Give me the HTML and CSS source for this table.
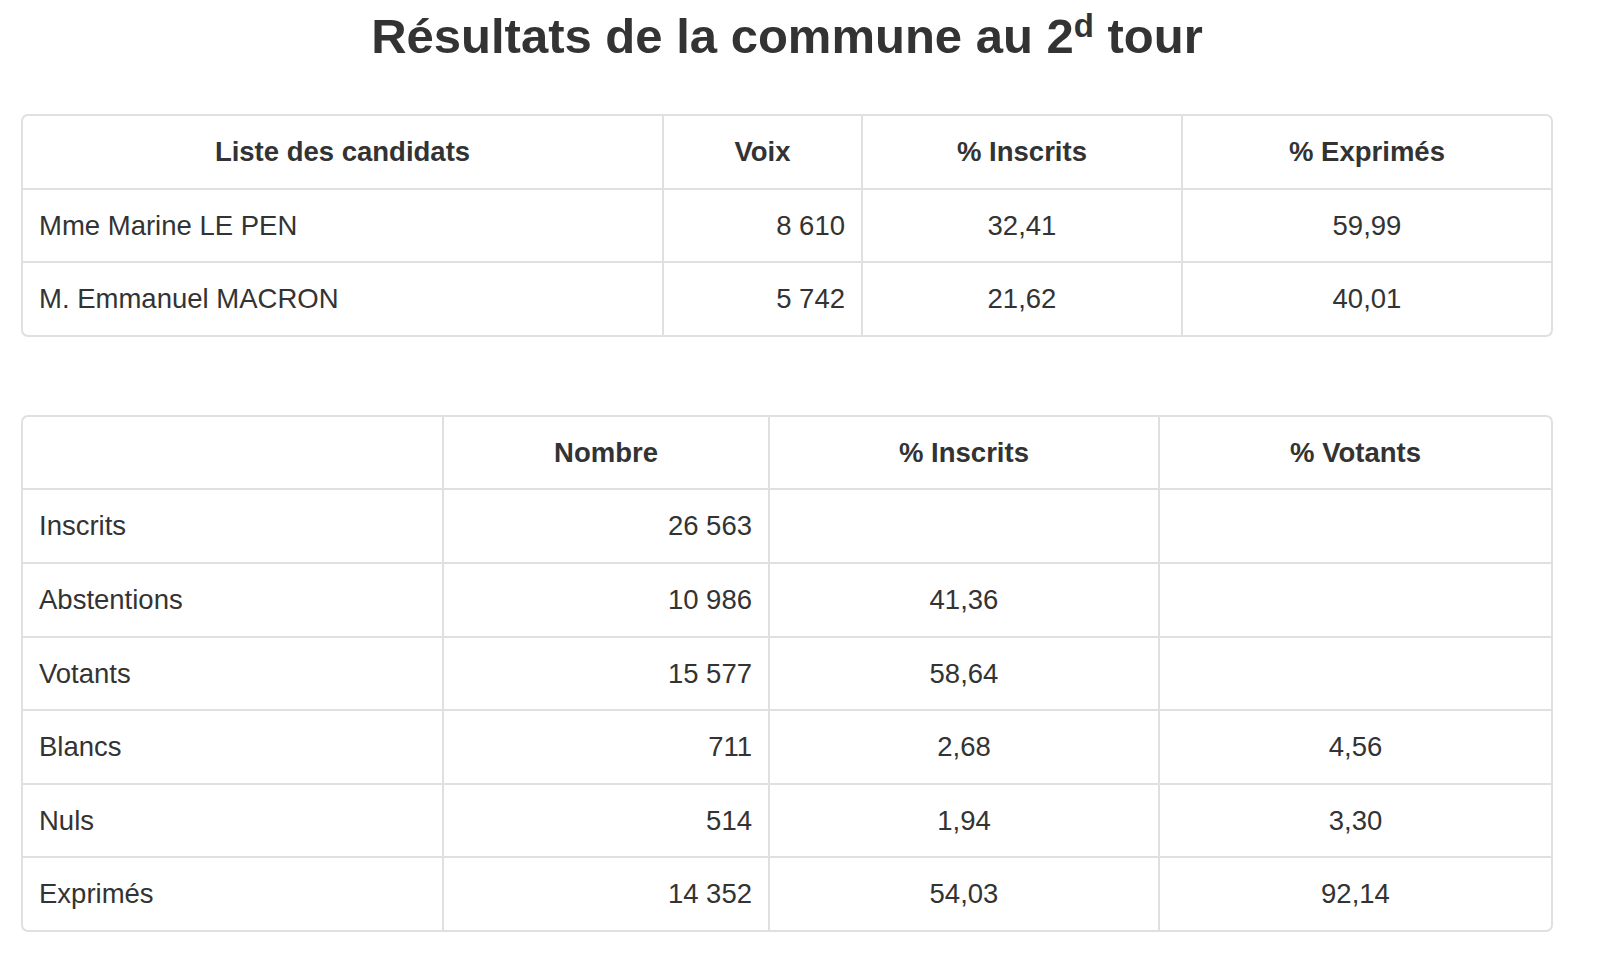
FILE: index.html
```html
<!DOCTYPE html>
<html lang="fr">
<head>
<meta charset="utf-8">
<title>Résultats de la commune au 2d tour</title>
<link rel="stylesheet" href="styles.css">
</head>
<body>
<div class="page">
  <h2 class="title">Résultats de la commune au 2<sup>d</sup> tour</h2>

  <div class="panel panel-candidats">
    <table class="results">
      <colgroup>
        <col class="c1a"><col class="c2a"><col class="c3a"><col class="c4a">
      </colgroup>
      <thead>
        <tr>
          <th>Liste des candidats</th>
          <th>Voix</th>
          <th>% Inscrits</th>
          <th>% Exprimés</th>
        </tr>
      </thead>
      <tbody>
        <tr>
          <td class="left">Mme Marine LE PEN</td>
          <td class="right">8 610</td>
          <td class="center">32,41</td>
          <td class="center">59,99</td>
        </tr>
        <tr>
          <td class="left">M. Emmanuel MACRON</td>
          <td class="right">5 742</td>
          <td class="center">21,62</td>
          <td class="center">40,01</td>
        </tr>
      </tbody>
    </table>
  </div>

  <div class="panel panel-stats">
    <table class="results">
      <colgroup>
        <col class="c1b"><col class="c2b"><col class="c3b"><col class="c4b">
      </colgroup>
      <thead>
        <tr>
          <th></th>
          <th>Nombre</th>
          <th>% Inscrits</th>
          <th>% Votants</th>
        </tr>
      </thead>
      <tbody>
        <tr>
          <td class="left">Inscrits</td>
          <td class="right">26 563</td>
          <td class="center"></td>
          <td class="center"></td>
        </tr>
        <tr>
          <td class="left">Abstentions</td>
          <td class="right">10 986</td>
          <td class="center">41,36</td>
          <td class="center"></td>
        </tr>
        <tr>
          <td class="left">Votants</td>
          <td class="right">15 577</td>
          <td class="center">58,64</td>
          <td class="center"></td>
        </tr>
        <tr>
          <td class="left">Blancs</td>
          <td class="right">711</td>
          <td class="center">2,68</td>
          <td class="center">4,56</td>
        </tr>
        <tr>
          <td class="left">Nuls</td>
          <td class="right">514</td>
          <td class="center">1,94</td>
          <td class="center">3,30</td>
        </tr>
        <tr>
          <td class="left">Exprimés</td>
          <td class="right">14 352</td>
          <td class="center">54,03</td>
          <td class="center">92,14</td>
        </tr>
      </tbody>
    </table>
  </div>
</div>
</body>
</html>
```
FILE: styles.css
```css
html, body {
  margin: 0;
  padding: 0;
  background: #ffffff;
}

body {
  font-family: "Liberation Sans", Arial, Helvetica, sans-serif;
  color: #333333;
}

.page {
  width: 1532px;
  margin-left: 21px;
  padding-top: 9px;
  display: flex;
  flex-direction: column;
}

.title {
  margin: 0 0 51px 0;
  text-align: center;
  font-size: 49px;
  line-height: 54px;
  font-weight: 700;
  color: #333333;
}

.title sup {
  font-size: 33px;
  line-height: 0;
  vertical-align: 16px;
}

.panel {
  border: 2px solid #e0e0e0;
  border-radius: 7px;
  overflow: hidden;
  background: #fff;
}

.panel-candidats {
  margin-bottom: 78px;
}

.results {
  width: 1528px;
  table-layout: fixed;
  border-collapse: collapse;
  border-style: hidden;
  font-size: 27.5px;
  line-height: 39.6px;
}

.results th,
.results td {
  border: 2px solid #e0e0e0;
  padding: 16px 16px;
  height: 39.6px;
}

.results th {
  font-weight: 700;
  text-align: center;
  color: #333;
}

.results td.left { text-align: left; }
.results td.right { text-align: right; }
.results td.center { text-align: center; }

.c1a { width: 640px; }
.c2a { width: 199px; }
.c3a { width: 320px; }
.c4a { width: 369px; }

.c1b { width: 420px; }
.c2b { width: 326px; }
.c3b { width: 390px; }
.c4b { width: 392px; }
```
